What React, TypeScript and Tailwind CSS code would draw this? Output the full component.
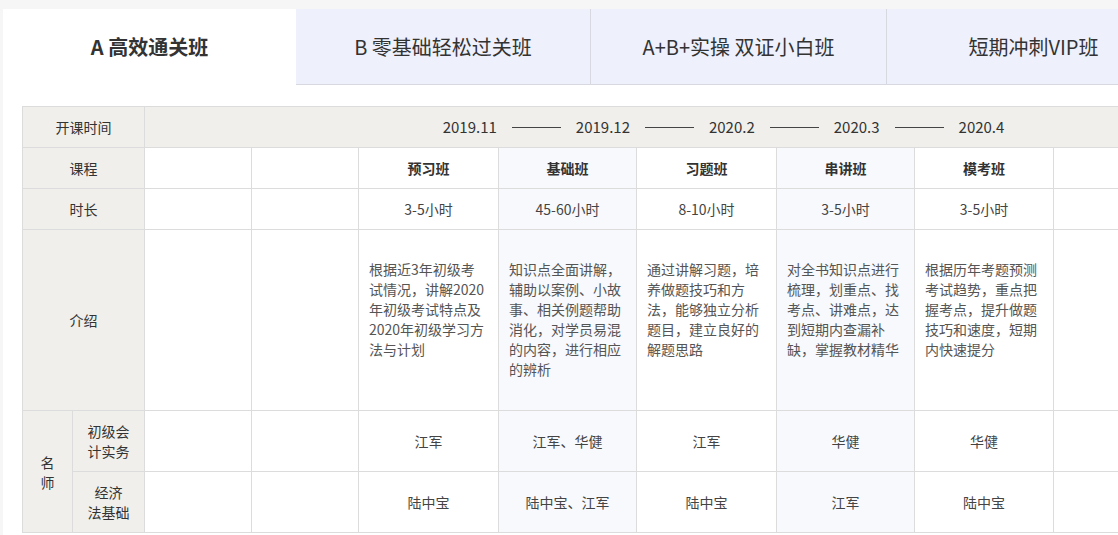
import React from 'react'

const font = { fontFamily: '"Noto Sans CJK SC", "Microsoft YaHei", sans-serif' }

const tabs = [
  { label: 'A 高效通关班', active: true, w: 'w-[293px]' },
  { label: 'B 零基础轻松过关班', active: false, w: 'w-[294px]' },
  { label: 'A+B+实操 双证小白班', active: false, w: 'w-[296px]' },
  { label: '短期冲刺VIP班', active: false, w: 'w-[294px]' },
]

const dates = ['2019.11', '2019.12', '2020.2', '2020.3', '2020.4']

// course columns; hl = light blue column
const courses = [
  {
    name: '预习班',
    hours: '3-5小时',
    hl: false,
    intro: ['根据近3年初级考', '试情况，讲解2020', '年初级考试特点及', '2020年初级学习方', '法与计划'],
    t1: '江军',
    t2: '陆中宝',
  },
  {
    name: '基础班',
    hours: '45-60小时',
    hl: true,
    intro: ['知识点全面讲解，', '辅助以案例、小故', '事、相关例题帮助', '消化，对学员易混', '的内容，进行相应', '的辨析'],
    t1: '江军、华健',
    t2: '陆中宝、江军',
  },
  {
    name: '习题班',
    hours: '8-10小时',
    hl: false,
    intro: ['通过讲解习题，培', '养做题技巧和方', '法，能够独立分析', '题目，建立良好的', '解题思路'],
    t1: '江军',
    t2: '陆中宝',
  },
  {
    name: '串讲班',
    hours: '3-5小时',
    hl: true,
    intro: ['对全书知识点进行', '梳理，划重点、找', '考点、讲难点，达', '到短期内查漏补', '缺，掌握教材精华'],
    t1: '华健',
    t2: '江军',
  },
  {
    name: '模考班',
    hours: '3-5小时',
    hl: false,
    intro: ['根据历年考题预测', '考试趋势，重点把', '握考点，提升做题', '技巧和速度，短期', '内快速提分'],
    t1: '华健',
    t2: '陆中宝',
  },
]

const cell = 'border border-[#dcdcdc] p-0'
const label = `${cell} bg-[#f0efeb] text-[#333] text-center`

function Blank({ n }: { n: number }) {
  return (
    <>
      {Array.from({ length: n }).map((_, i) => (
        <td key={i} className={cell} />
      ))}
    </>
  )
}

export default function App() {
  return (
    <div className="w-[1118px] h-[535px] overflow-hidden bg-[#f6f6f6] pt-[9px] pl-[3px]" style={font}>
      <div className="bg-white h-full">
        {/* tabs */}
        <div className="flex h-[76px] w-[1200px]">
          {tabs.map((t, i) => (
            <div
              key={t.label}
              className={`${t.w} shrink-0 flex items-center justify-center text-[20px] ${
                t.active
                  ? 'bg-white font-bold text-[#333]'
                  : `bg-[#eef0fc] text-[#333] border-b border-[#d8d9e0] ${i > 1 ? 'border-l' : ''}`
              }`}
            >
              {t.label}
            </div>
          ))}
        </div>

        {/* table */}
        <div className="pt-[21px] pl-[19px]">
          <table className="table-fixed border-collapse w-[1286px] text-[14px] leading-[20px]">
            <colgroup>
              <col className="w-[50px]" />
              <col className="w-[72px]" />
              <col className="w-[107px]" />
              <col className="w-[107px]" />
              <col className="w-[140px]" />
              <col className="w-[138px]" />
              <col className="w-[140px]" />
              <col className="w-[138px]" />
              <col className="w-[139px]" />
              <col className="w-[139px]" />
              <col className="w-[116px]" />
            </colgroup>
            <tbody>
              <tr className="h-[41px]">
                <td colSpan={2} className={label}>开课时间</td>
                <td colSpan={9} className={`${cell} bg-[#f0efeb] text-[#333] text-[15px]`}>
                  <div className="flex items-center justify-center pr-[6px]">
                    {dates.map((d, i) => (
                      <React.Fragment key={d}>
                        {i > 0 && <span className="inline-block w-[49px] mx-[15px] border-t border-[#444]" />}
                        <span>{d}</span>
                      </React.Fragment>
                    ))}
                  </div>
                </td>
              </tr>
              <tr className="h-[41px]">
                <td colSpan={2} className={label}>课程</td>
                <Blank n={2} />
                {courses.map((c) => (
                  <td key={c.name} className={`${cell} text-center font-bold text-[#333] ${c.hl ? 'bg-[#f7f9fc]' : ''}`}>
                    {c.name}
                  </td>
                ))}
                <Blank n={2} />
              </tr>
              <tr className="h-[41px]">
                <td colSpan={2} className={label}>时长</td>
                <Blank n={2} />
                {courses.map((c) => (
                  <td key={c.name} className={`${cell} text-center text-[#444] ${c.hl ? 'bg-[#f7f9fc]' : ''}`}>
                    {c.hours}
                  </td>
                ))}
                <Blank n={2} />
              </tr>
              <tr className="h-[181px]">
                <td colSpan={2} className={label}>介绍</td>
                <Blank n={2} />
                {courses.map((c) => (
                  <td
                    key={c.name}
                    className={`${cell} align-top pt-[29px] pl-[10px] text-[#555] whitespace-nowrap ${c.hl ? 'bg-[#f7f9fc]' : ''}`}
                  >
                    {c.intro.map((l) => (
                      <div key={l}>{l}</div>
                    ))}
                  </td>
                ))}
                <Blank n={2} />
              </tr>
              <tr className="h-[61px]">
                <td rowSpan={2} className={label}>
                  名<br />师
                </td>
                <td className={label}>
                  初级会<br />计实务
                </td>
                <Blank n={2} />
                {courses.map((c) => (
                  <td key={c.name} className={`${cell} text-center text-[#444] ${c.hl ? 'bg-[#f7f9fc]' : ''}`}>
                    {c.t1}
                  </td>
                ))}
                <Blank n={2} />
              </tr>
              <tr className="h-[61px]">
                <td className={label}>
                  经济<br />法基础
                </td>
                <Blank n={2} />
                {courses.map((c) => (
                  <td key={c.name} className={`${cell} text-center text-[#444] ${c.hl ? 'bg-[#f7f9fc]' : ''}`}>
                    {c.t2}
                  </td>
                ))}
                <Blank n={2} />
              </tr>
            </tbody>
          </table>
        </div>
      </div>
    </div>
  )
}
